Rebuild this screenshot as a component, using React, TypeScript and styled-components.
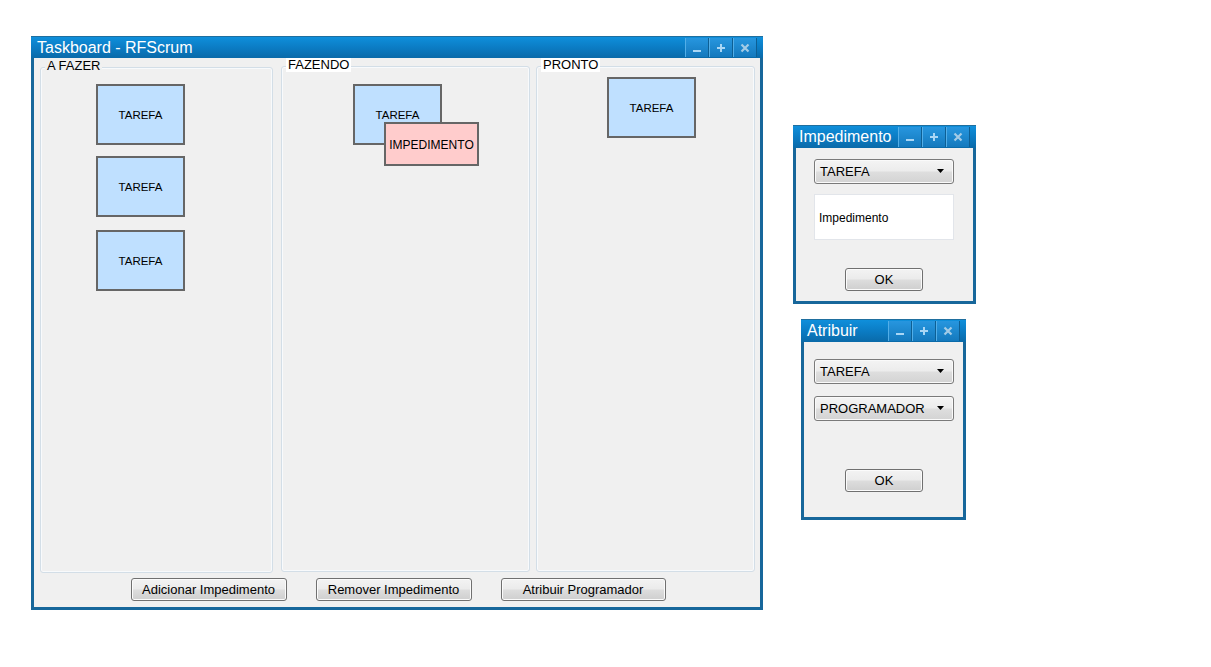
import React from "react";
import styled, { createGlobalStyle } from "styled-components";

const GlobalStyle = createGlobalStyle`
  html, body { margin: 0; padding: 0; background: #ffffff; }
  body { font-family: "Liberation Sans", Arial, sans-serif; }
  * { box-sizing: border-box; }
`;

const Desktop = styled.div`
  position: relative;
  width: 1211px;
  height: 667px;
  background: #ffffff;
  overflow: hidden;
`;

const Frame = styled.div<{ $x: number; $y: number; $w: number; $h: number }>`
  position: absolute;
  left: ${(p) => p.$x}px;
  top: ${(p) => p.$y}px;
  width: ${(p) => p.$w}px;
  height: ${(p) => p.$h}px;
  background: #17679b;
  padding: 0 3px 3px 3px;
  display: flex;
  flex-direction: column;
`;

const TitleBar = styled.div<{ $h: number }>`
  height: ${(p) => p.$h}px;
  flex: none;
  margin: 0 -3px;
  padding: 0 3px 0 6px;
  display: flex;
  align-items: center;
  background: linear-gradient(#0f8fdb 0%, #0b7cc4 50%, #0a6aa9 100%);
  border-top: 1px solid #1f6f9f;
`;

const Title = styled.div`
  flex: 1;
  color: #ffffff;
  font-size: 16px;
  line-height: 18px;
  white-space: nowrap;
`;

const TitleButtons = styled.div`
  display: flex;
  align-self: stretch;
  padding: 1px 3px 1px 0;
`;

const TitleButton = styled.div`
  width: 24px;
  display: flex;
  align-items: center;
  justify-content: center;
  background: linear-gradient(#2796df, #1479bd);
  border-left: 1px solid #52aee8;
  border-right: 1px solid #0d5f94;
`;

const Body = styled.div`
  flex: 1;
  background: #f0f0f0;
  display: flex;
  flex-direction: column;
`;

const Columns = styled.div`
  height: 515px;
  display: flex;
  padding: 0 5px 0 6px;
`;

const Column = styled.div<{ $w: number; $ml: number; $mt: number; $pt: number; $pl: number }>`
  position: relative;
  width: ${(p) => p.$w}px;
  margin-left: ${(p) => p.$ml}px;
  margin-top: ${(p) => p.$mt}px;
  margin-bottom: ${(p) => (p.$mt > 8 ? 0 : 1)}px;
  border: 1px solid #d3dee7;
  border-radius: 3px;
  box-shadow: inset 0 0 0 1px #f8fafc;
  padding: ${(p) => p.$pt}px 0 0 ${(p) => p.$pl}px;
  display: flex;
  flex-direction: column;
  align-items: flex-start;
`;

const ColumnLabel = styled.div<{ $bg: string }>`
  position: absolute;
  top: -9px;
  left: 4px;
  padding: 0 2px;
  font-size: 13px;
  line-height: 14px;
  color: #000;
  background: ${(p) => p.$bg};
`;

const Stack = styled.div`
  display: flex;
  flex-direction: column;
`;

const Card = styled.div<{ $bg: string; $w: number; $h: number }>`
  position: relative;
  width: ${(p) => p.$w}px;
  height: ${(p) => p.$h}px;
  background: ${(p) => p.$bg};
  border: 2px solid #666666;
  display: flex;
  align-items: center;
  justify-content: center;
  font-size: 11.5px;
  color: #000;
`;

const Impediment = styled(Card)`
  position: absolute;
  left: 29px;
  top: 36px;
  font-size: 12px;
  padding-top: 1px;
`;

const ButtonRow = styled.div`
  display: flex;
  justify-content: center;
  gap: 29px;
  margin-top: 5px;
  padding-left: 2px;
`;

const Button = styled.div<{ $w: number }>`
  width: ${(p) => p.$w}px;
  height: 23px;
  border: 1px solid #707070;
  border-radius: 3px;
  background: linear-gradient(#f3f3f3 0%, #ebebeb 48%, #dddddd 52%, #cfcfcf 100%);
  box-shadow: inset 0 0 0 1px #fbfbfb;
  display: flex;
  align-items: center;
  justify-content: center;
  font-size: 13px;
  color: #000;
  white-space: nowrap;
`;

const DialogBody = styled.div<{ $pl: number; $pt: number; $gap: number }>`
  flex: 1;
  background: #f0f0f0;
  padding: ${(p) => p.$pt}px 0 0 ${(p) => p.$pl}px;
  display: flex;
  flex-direction: column;
  gap: ${(p) => p.$gap}px;
`;

const Select = styled.div`
  width: 140px;
  height: 25px;
  border: 1px solid #7a7a7a;
  border-radius: 3px;
  background: linear-gradient(#f4f4f4 0%, #ececec 48%, #dedede 52%, #d3d3d3 100%);
  box-shadow: inset 0 0 0 1px #fafafa;
  display: flex;
  align-items: center;
  padding: 0 8px 0 5px;
  font-size: 13px;
  color: #000;
`;

const SelectText = styled.span`
  flex: 1;
`;

const TextArea = styled.div`
  width: 140px;
  height: 46px;
  background: #ffffff;
  border: 1px solid #e2e5ea;
  display: flex;
  align-items: center;
  padding: 2px 0 0 4px;
  font-size: 12px;
  color: #000;
`;

const OkRow = styled.div<{ $mt: number; $ml: number }>`
  margin-top: ${(p) => p.$mt}px;
  margin-left: ${(p) => p.$ml}px;
`;

const Arrow = () => (
  <svg width="8" height="5" viewBox="0 0 8 5">
    <path d="M0 0 H7 L3.5 4 Z" fill="#000" />
  </svg>
);

const IconMin = () => (
  <svg width="10" height="10" viewBox="0 0 10 10">
    <rect x="1" y="7" width="8" height="2" fill="#a9d6f5" />
  </svg>
);
const IconMax = () => (
  <svg width="10" height="10" viewBox="0 0 10 10">
    <rect x="1" y="4" width="8" height="2" fill="#a9d6f5" />
    <rect x="4" y="1" width="2" height="8" fill="#a9d6f5" />
  </svg>
);
const IconClose = () => (
  <svg width="10" height="10" viewBox="0 0 10 10">
    <path d="M1.5 1.5 L8.5 8.5 M8.5 1.5 L1.5 8.5" stroke="#a3cbe6" strokeWidth="2.2" />
  </svg>
);

const WindowButtons = () => (
  <TitleButtons>
    <TitleButton><IconMin /></TitleButton>
    <TitleButton><IconMax /></TitleButton>
    <TitleButton><IconClose /></TitleButton>
  </TitleButtons>
);

export default function App() {
  return (
    <>
      <GlobalStyle />
      <Desktop>
        <Frame $x={31} $y={36} $w={732} $h={574}>
          <TitleBar $h={22}>
            <Title>Taskboard - RFScrum</Title>
            <WindowButtons />
          </TitleBar>
          <Body>
            <Columns>
              <Column $w={233} $ml={0} $mt={9} $pt={16} $pl={55}>
                <ColumnLabel $bg="#f0f0f0">A FAZER</ColumnLabel>
                <Stack>
                  <Card $bg="#bfe0ff" $w={89} $h={61}>TAREFA</Card>
                  <Card $bg="#bfe0ff" $w={89} $h={61} style={{ marginTop: 11 }}>TAREFA</Card>
                  <Card $bg="#bfe0ff" $w={89} $h={61} style={{ marginTop: 13 }}>TAREFA</Card>
                </Stack>
              </Column>
              <Column $w={249} $ml={8} $mt={8} $pt={17} $pl={71}>
                <ColumnLabel $bg="#ffffff">FAZENDO</ColumnLabel>
                <Card $bg="#bfe0ff" $w={89} $h={61}>
                  TAREFA
                  <Impediment $bg="#ffcccc" $w={95} $h={44}>IMPEDIMENTO</Impediment>
                </Card>
              </Column>
              <Column $w={219} $ml={6} $mt={8} $pt={10} $pl={70}>
                <ColumnLabel $bg="#ffffff">PRONTO</ColumnLabel>
                <Card $bg="#bfe0ff" $w={89} $h={61}>TAREFA</Card>
              </Column>
            </Columns>
            <ButtonRow>
              <Button $w={156}>Adicionar Impedimento</Button>
              <Button $w={156}>Remover Impedimento</Button>
              <Button $w={165}>Atribuir Programador</Button>
            </ButtonRow>
          </Body>
        </Frame>

        <Frame $x={793} $y={125} $w={183} $h={179}>
          <TitleBar $h={23}>
            <Title>Impedimento</Title>
            <WindowButtons />
          </TitleBar>
          <DialogBody $pl={18} $pt={11} $gap={10}>
            <Select>
              <SelectText>TAREFA</SelectText>
              <Arrow />
            </Select>
            <TextArea>Impedimento</TextArea>
            <OkRow $mt={18} $ml={31}>
              <Button $w={78}>OK</Button>
            </OkRow>
          </DialogBody>
        </Frame>

        <Frame $x={801} $y={319} $w={165} $h={201}>
          <TitleBar $h={23}>
            <Title>Atribuir</Title>
            <WindowButtons />
          </TitleBar>
          <DialogBody $pl={10} $pt={17} $gap={12}>
            <Select>
              <SelectText>TAREFA</SelectText>
              <Arrow />
            </Select>
            <Select>
              <SelectText>PROGRAMADOR</SelectText>
              <Arrow />
            </Select>
            <OkRow $mt={36} $ml={31}>
              <Button $w={78}>OK</Button>
            </OkRow>
          </DialogBody>
        </Frame>
      </Desktop>
    </>
  );
}
